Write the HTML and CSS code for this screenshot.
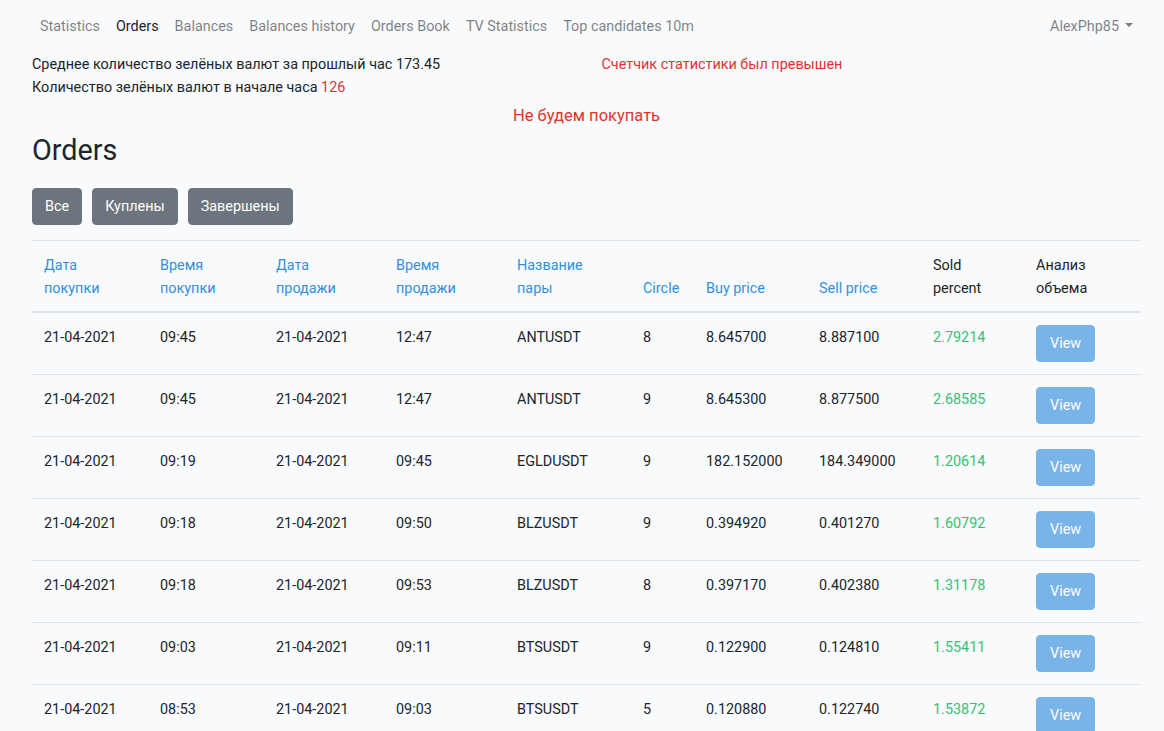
FILE: index.html
```html
<!DOCTYPE html>
<html lang="ru">
<head>
<meta charset="utf-8">
<title>Orders</title>
<link rel="stylesheet" href="styles.css">
</head>
<body>
<nav class="navbar">
  <ul class="nav-links">
    <li><a class="nav-link" href="#">Statistics</a></li>
    <li><a class="nav-link active" href="#">Orders</a></li>
    <li><a class="nav-link" href="#">Balances</a></li>
    <li><a class="nav-link" href="#">Balances history</a></li>
    <li><a class="nav-link" href="#">Orders Book</a></li>
    <li><a class="nav-link" href="#">TV Statistics</a></li>
    <li><a class="nav-link" href="#">Top candidates 10m</a></li>
  </ul>
  <a class="nav-link dropdown-toggle" href="#">AlexPhp85</a>
</nav>
<main class="main">
  <div class="stats">
    <div>
      <div>Среднее количество зелёных валют за прошлый час 173.45</div>
      <div>Количество зелёных валют в начале часа <span class="text-danger">126</span></div>
    </div>
    <div class="text-danger">Счетчик статистики был превышен</div>
  </div>
  <div class="notice text-danger">Не будем покупать</div>
  <h2 class="title">Orders</h2>
  <div class="filters">
    <a class="btn btn-secondary" href="#">Все</a>
    <a class="btn btn-secondary" href="#">Куплены</a>
    <a class="btn btn-secondary" href="#">Завершены</a>
  </div>
  <table class="table">
    <colgroup>
      <col class="c116"><col class="c116"><col class="c120"><col class="c121"><col class="c126">
      <col class="c63"><col class="c113"><col class="c114"><col class="c103"><col class="c117">
    </colgroup>
    <thead>
      <tr>
        <th><a href="#">Дата<br>покупки</a></th>
        <th><a href="#">Время<br>покупки</a></th>
        <th><a href="#">Дата<br>продажи</a></th>
        <th><a href="#">Время<br>продажи</a></th>
        <th><a href="#">Название<br>пары</a></th>
        <th><a href="#">Circle</a></th>
        <th><a href="#">Buy price</a></th>
        <th><a href="#">Sell price</a></th>
        <th>Sold<br>percent</th>
        <th>Анализ<br>объема</th>
      </tr>
    </thead>
    <tbody>
      <tr><td>21-04-2021</td><td>09:45</td><td>21-04-2021</td><td>12:47</td><td>ANTUSDT</td><td>8</td><td>8.645700</td><td>8.887100</td><td class="text-success">2.79214</td><td><span class="btn btn-view">View</span></td></tr>
      <tr><td>21-04-2021</td><td>09:45</td><td>21-04-2021</td><td>12:47</td><td>ANTUSDT</td><td>9</td><td>8.645300</td><td>8.877500</td><td class="text-success">2.68585</td><td><span class="btn btn-view">View</span></td></tr>
      <tr><td>21-04-2021</td><td>09:19</td><td>21-04-2021</td><td>09:45</td><td>EGLDUSDT</td><td>9</td><td>182.152000</td><td>184.349000</td><td class="text-success">1.20614</td><td><span class="btn btn-view">View</span></td></tr>
      <tr><td>21-04-2021</td><td>09:18</td><td>21-04-2021</td><td>09:50</td><td>BLZUSDT</td><td>9</td><td>0.394920</td><td>0.401270</td><td class="text-success">1.60792</td><td><span class="btn btn-view">View</span></td></tr>
      <tr><td>21-04-2021</td><td>09:18</td><td>21-04-2021</td><td>09:53</td><td>BLZUSDT</td><td>8</td><td>0.397170</td><td>0.402380</td><td class="text-success">1.31178</td><td><span class="btn btn-view">View</span></td></tr>
      <tr><td>21-04-2021</td><td>09:03</td><td>21-04-2021</td><td>09:11</td><td>BTSUSDT</td><td>9</td><td>0.122900</td><td>0.124810</td><td class="text-success">1.55411</td><td><span class="btn btn-view">View</span></td></tr>
      <tr><td>21-04-2021</td><td>08:53</td><td>21-04-2021</td><td>09:03</td><td>BTSUSDT</td><td>5</td><td>0.120880</td><td>0.122740</td><td class="text-success">1.53872</td><td><span class="btn btn-view">View</span></td></tr>
    </tbody>
  </table>
</main>
</body>
</html>
```
FILE: styles.css
```css
html, body {
  margin: 0;
  padding: 0;
}
body {
  background: #f8fafc;
  color: #212529;
  font-family: Roboto, "Noto Sans", sans-serif;
  font-size: 14.4px;
  line-height: 1.6;
}
a {
  color: #3490dc;
  text-decoration: none;
}
.navbar {
  display: flex;
  justify-content: space-between;
  align-items: center;
  padding: 7px 23px 5px 32px;
}
.nav-links {
  display: flex;
  list-style: none;
  margin: 0;
  padding: 0;
}
.nav-link {
  display: block;
  padding: 8px;
  color: rgba(0, 0, 0, 0.5);
}
.nav-link.active {
  color: rgba(0, 0, 0, 0.9);
}
.dropdown-toggle::after {
  content: "";
  display: inline-block;
  margin-left: 6px;
  vertical-align: 0.255em;
  border-top: 0.3em solid;
  border-right: 0.3em solid transparent;
  border-left: 0.3em solid transparent;
  border-bottom: 0;
}
.main {
  padding: 0 23px 0 32px;
}
.stats {
  display: grid;
  grid-template-columns: 1fr 1fr;
  column-gap: 30px;
  margin-top: 1.5px;
}
.text-danger {
  color: #e3342f;
}
.text-success {
  color: #38c172;
}
.notice {
  text-align: center;
  font-size: 16.5px;
  line-height: 1.2;
  margin-top: 7px;
}
.title {
  font-size: 28.8px;
  font-weight: 400;
  line-height: 1.2;
  margin: 8px 0 0;
}
.filters {
  display: flex;
  gap: 10px;
  margin-top: 20px;
}
.btn {
  display: inline-block;
  padding: 6px 12px;
  border: 1px solid transparent;
  border-radius: 4px;
  line-height: 1.6;
  font-size: 14.4px;
  text-align: center;
}
.btn-secondary {
  color: #fff;
  background: #6c757d;
  border-color: #6c757d;
}
.btn-view {
  color: #fff;
  background: #3490dc;
  border-color: #3490dc;
  opacity: 0.65;
  padding: 6px 13px;
  margin: -1px 0 1px;
}
.table {
  width: 100%;
  margin-top: 15px;
  border-collapse: collapse;
  table-layout: fixed;
}
.table th,
.table td {
  padding: 13px 12px 11px;
  text-align: left;
  border-top: 1px solid #dee2e6;
  vertical-align: top;
  font-weight: 400;
}
.table thead th {
  vertical-align: bottom;
  border-bottom: 2px solid #dee2e6;
}
.c116 { width: 116px; }
.c120 { width: 120px; }
.c121 { width: 121px; }
.c126 { width: 126px; }
.c63 { width: 63px; }
.c113 { width: 113px; }
.c114 { width: 114px; }
.c103 { width: 103px; }
.c117 { width: 117px; }
```
